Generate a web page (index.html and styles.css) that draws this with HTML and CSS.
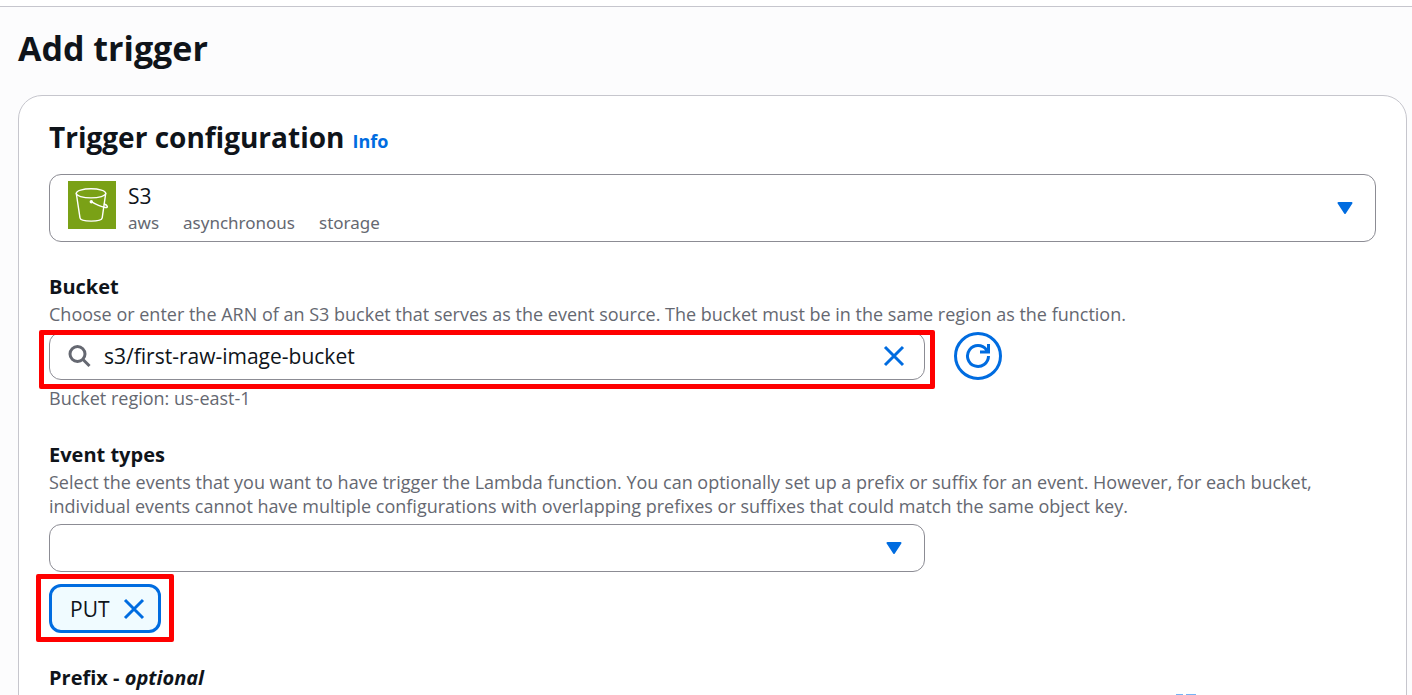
FILE: index.html
```html
<!DOCTYPE html>
<html lang="en">
<head>
<meta charset="utf-8">
<meta name="viewport" content="width=device-width, initial-scale=1">
<title>Add trigger</title>
<link rel="stylesheet" href="styles.css">
</head>
<body>
<div class="topbar"></div>
<main class="page">
  <h1 class="page-title">Add trigger</h1>
  <form class="card">
    <header class="card-header">
      <h2 class="card-title">Trigger configuration</h2>
      <a class="info" href="#info">Info</a>
    </header>

    <div class="source">
      <select class="control source-select" aria-label="Trigger source"><option>S3</option></select>
      <svg class="source-icon" viewBox="0 0 48 48" aria-hidden="true">
        <rect width="48" height="48" fill="#7aa116"/>
        <g fill="none" stroke="#fff" stroke-width="1.4" stroke-linecap="round" stroke-linejoin="round">
          <ellipse cx="23" cy="12.3" rx="14.7" ry="4.6"/>
          <path d="M8.3 12.5l3.7 24.4c.6 4.3 21.6 4.3 22.2 0L37.7 12.5"/>
          <path d="M23.3 20.7c4.5 2.8 9.500 5 14 5.800 3.200.5 2.600-2-1-3.500"/>
        </g>
        <circle cx="23.300" cy="20.700" r="1.700" fill="#fff"/>
      </svg>
      <div class="tags"><span>aws</span><span>asynchronous</span><span>storage</span></div>
      <svg class="caret" viewBox="0 0 16 12" aria-hidden="true"><path d="M1.500 1h13L8 11z"/></svg>
    </div>

    <section class="field">
      <label class="label" for="bucket">Bucket</label>
      <p class="hint">Choose or enter the ARN of an S3 bucket that serves as the event source. The bucket must be in the same region as the function.</p>
      <div class="row">
        <div class="main-column search marked">
          <input class="control search-input" id="bucket" type="text" value="s3/first-raw-image-bucket">
          <svg class="search-icon" viewBox="0 0 24 24" aria-hidden="true"><circle cx="9.500" cy="10" r="7.500"/><path d="M15 15.500l6.500 6.500"/></svg>
          <button class="icon-button clear" type="button" aria-label="Clear"><svg class="cross" viewBox="0 0 24 24"><path d="M3 3l18 18M21 3L3 21"/></svg></button>
        </div>
        <button class="refresh" type="button" aria-label="Refresh">
          <svg class="refresh-icon" viewBox="0 0 26 26"><path d="M23.500 13A10.500 10.500 0 1 1 21.500 6.800L23 8.500M23.500 1v8H15"/></svg>
        </button>
      </div>
      <p class="hint">Bucket region: us-east-1</p>
    </section>

    <section class="field">
      <label class="label" for="events">Event types</label>
      <p class="hint">Select the events that you want to have trigger the Lambda function. You can optionally set up a prefix or suffix for an event. However, for each bucket, individual events cannot have multiple configurations with overlapping prefixes or suffixes that could match the same object key.</p>
      <div class="main-column events">
        <select class="control" id="events"><option></option></select>
        <svg class="caret" viewBox="0 0 16 12" aria-hidden="true"><path d="M1.500 1h13L8 11z"/></svg>
      </div>
      <div class="token marked">
        <span>PUT</span>
        <button class="icon-button" type="button" aria-label="Remove PUT"><svg class="cross" viewBox="0 0 24 24"><path d="M3 3l18 18M21 3L3 21"/></svg></button>
      </div>
    </section>

    <section class="field">
      <label class="label" for="prefix">Prefix - <em>optional</em></label>
      <input class="control main-column prefix-input" id="prefix" type="text">
    </section>
  </form>
</main>
<svg class="edge-marks" viewBox="0 0 20 1" aria-hidden="true"><path d="M0 0h7v1H0zM10 0h10v1H10z"/></svg>
</body>
</html>
```
FILE: styles.css
```css
* { box-sizing: border-box; }

html, body { height: 100%; }

body {
  margin: 0;
  overflow: hidden;
  background: #fcfcfd;
  color: #0f141a;
  font: 18px/24px "Open Sans", "Noto Sans", sans-serif;
}

h1, h2, p { margin: 0; }

button, input, select { font: inherit; color: inherit; }

.topbar {
  height: 7px;
  background: #fff;
  border-bottom: 1px solid #c6c6cd;
}

.page { padding: 17px 5px 0 18px; }

.page-title {
  margin-bottom: 23px;
  font-size: 34px;
  font-weight: 700;
  line-height: 48px;
}

.card {
  padding: 23px 30px 30px;
  border: 1px solid #c6c6cd;
  border-radius: 24px;
  background: #fff;
}

.card-header {
  display: flex;
  align-items: baseline;
  gap: 8px;
  margin-bottom: 19px;
}

.card-title {
  font-size: 28px;
  font-weight: 700;
  line-height: 36px;
}

.info {
  color: #006ce0;
  font-size: 18px;
  font-weight: 700;
  text-decoration: none;
}

.control {
  width: 100%;
  height: 48px;
  border: 1px solid #8c8c94;
  border-radius: 12px;
  background: #fff;
  font-size: 21px;
  appearance: none;
}

.source, .search, .events { display: grid; align-items: center; }
.source > *, .search > *, .events > * { grid-area: 1 / 1; }

.source-select {
  height: 68px;
  padding: 0 60px 25px 78px;
}

.source-icon {
  align-self: start;
  width: 48px;
  height: 48px;
  margin: 7px 0 0 19px;
  pointer-events: none;
}

.tags {
  display: flex;
  align-self: end;
  gap: 24px;
  margin: 0 0 7px 79px;
  color: #656871;
  font: 17px/24px "Noto Sans", sans-serif;
  pointer-events: none;
}

.caret {
  justify-self: end;
  width: 16px;
  height: 12px;
  margin-right: 23px;
  fill: #006ce0;
  stroke: #006ce0;
  stroke-width: 2;
  stroke-linejoin: round;
  pointer-events: none;
}

.field {
  display: flex;
  flex-direction: column;
  align-items: flex-start;
  margin-top: 30px;
}

.label {
  font-size: 20px;
  font-weight: 700;
  line-height: 30px;
}

.hint { color: #656871; }

.main-column { width: 66%; }

.row {
  display: flex;
  gap: 29px;
  width: 100%;
  margin: 6px 0;
}

.search-input { padding: 0 54px; }

.search-icon {
  width: 24px;
  height: 24px;
  margin-left: 19px;
  fill: none;
  stroke: #656871;
  stroke-width: 3;
  pointer-events: none;
}

.icon-button {
  display: grid;
  padding: 0;
  border: 0;
  background: none;
}

.clear { justify-self: end; margin-right: 19px; }

.cross {
  width: 24px;
  height: 24px;
  fill: none;
  stroke: #006ce0;
  stroke-width: 3;
}

.refresh {
  display: grid;
  place-items: center;
  width: 48px;
  height: 48px;
  padding: 0;
  border: 3px solid #006ce0;
  border-radius: 50%;
  background: #fff;
}

.refresh-icon {
  width: 26px;
  height: 26px;
  fill: none;
  stroke: #006ce0;
  stroke-width: 3;
}

.events { margin-top: 6px; }

.token {
  display: flex;
  align-items: center;
  gap: 12px;
  height: 49px;
  margin-top: 12px;
  padding: 0 12px 0 18px;
  border: 3px solid #006ce0;
  border-radius: 12px;
  background: #f0fbff;
  font-size: 21px;
}

.prefix-input { margin-top: 30px; }

.marked { position: relative; }

.marked::after {
  content: "";
  position: absolute;
  inset: -2px -10px -9px -10px;
  border: 5px solid #f00;
  border-radius: 2px;
  pointer-events: none;
}

.token.marked::after { inset: -13px -16px -12px -16px; }

.edge-marks {
  position: absolute;
  right: 216px;
  bottom: 0;
  width: 20px;
  height: 1px;
  fill: #75b3f5;
}
```
